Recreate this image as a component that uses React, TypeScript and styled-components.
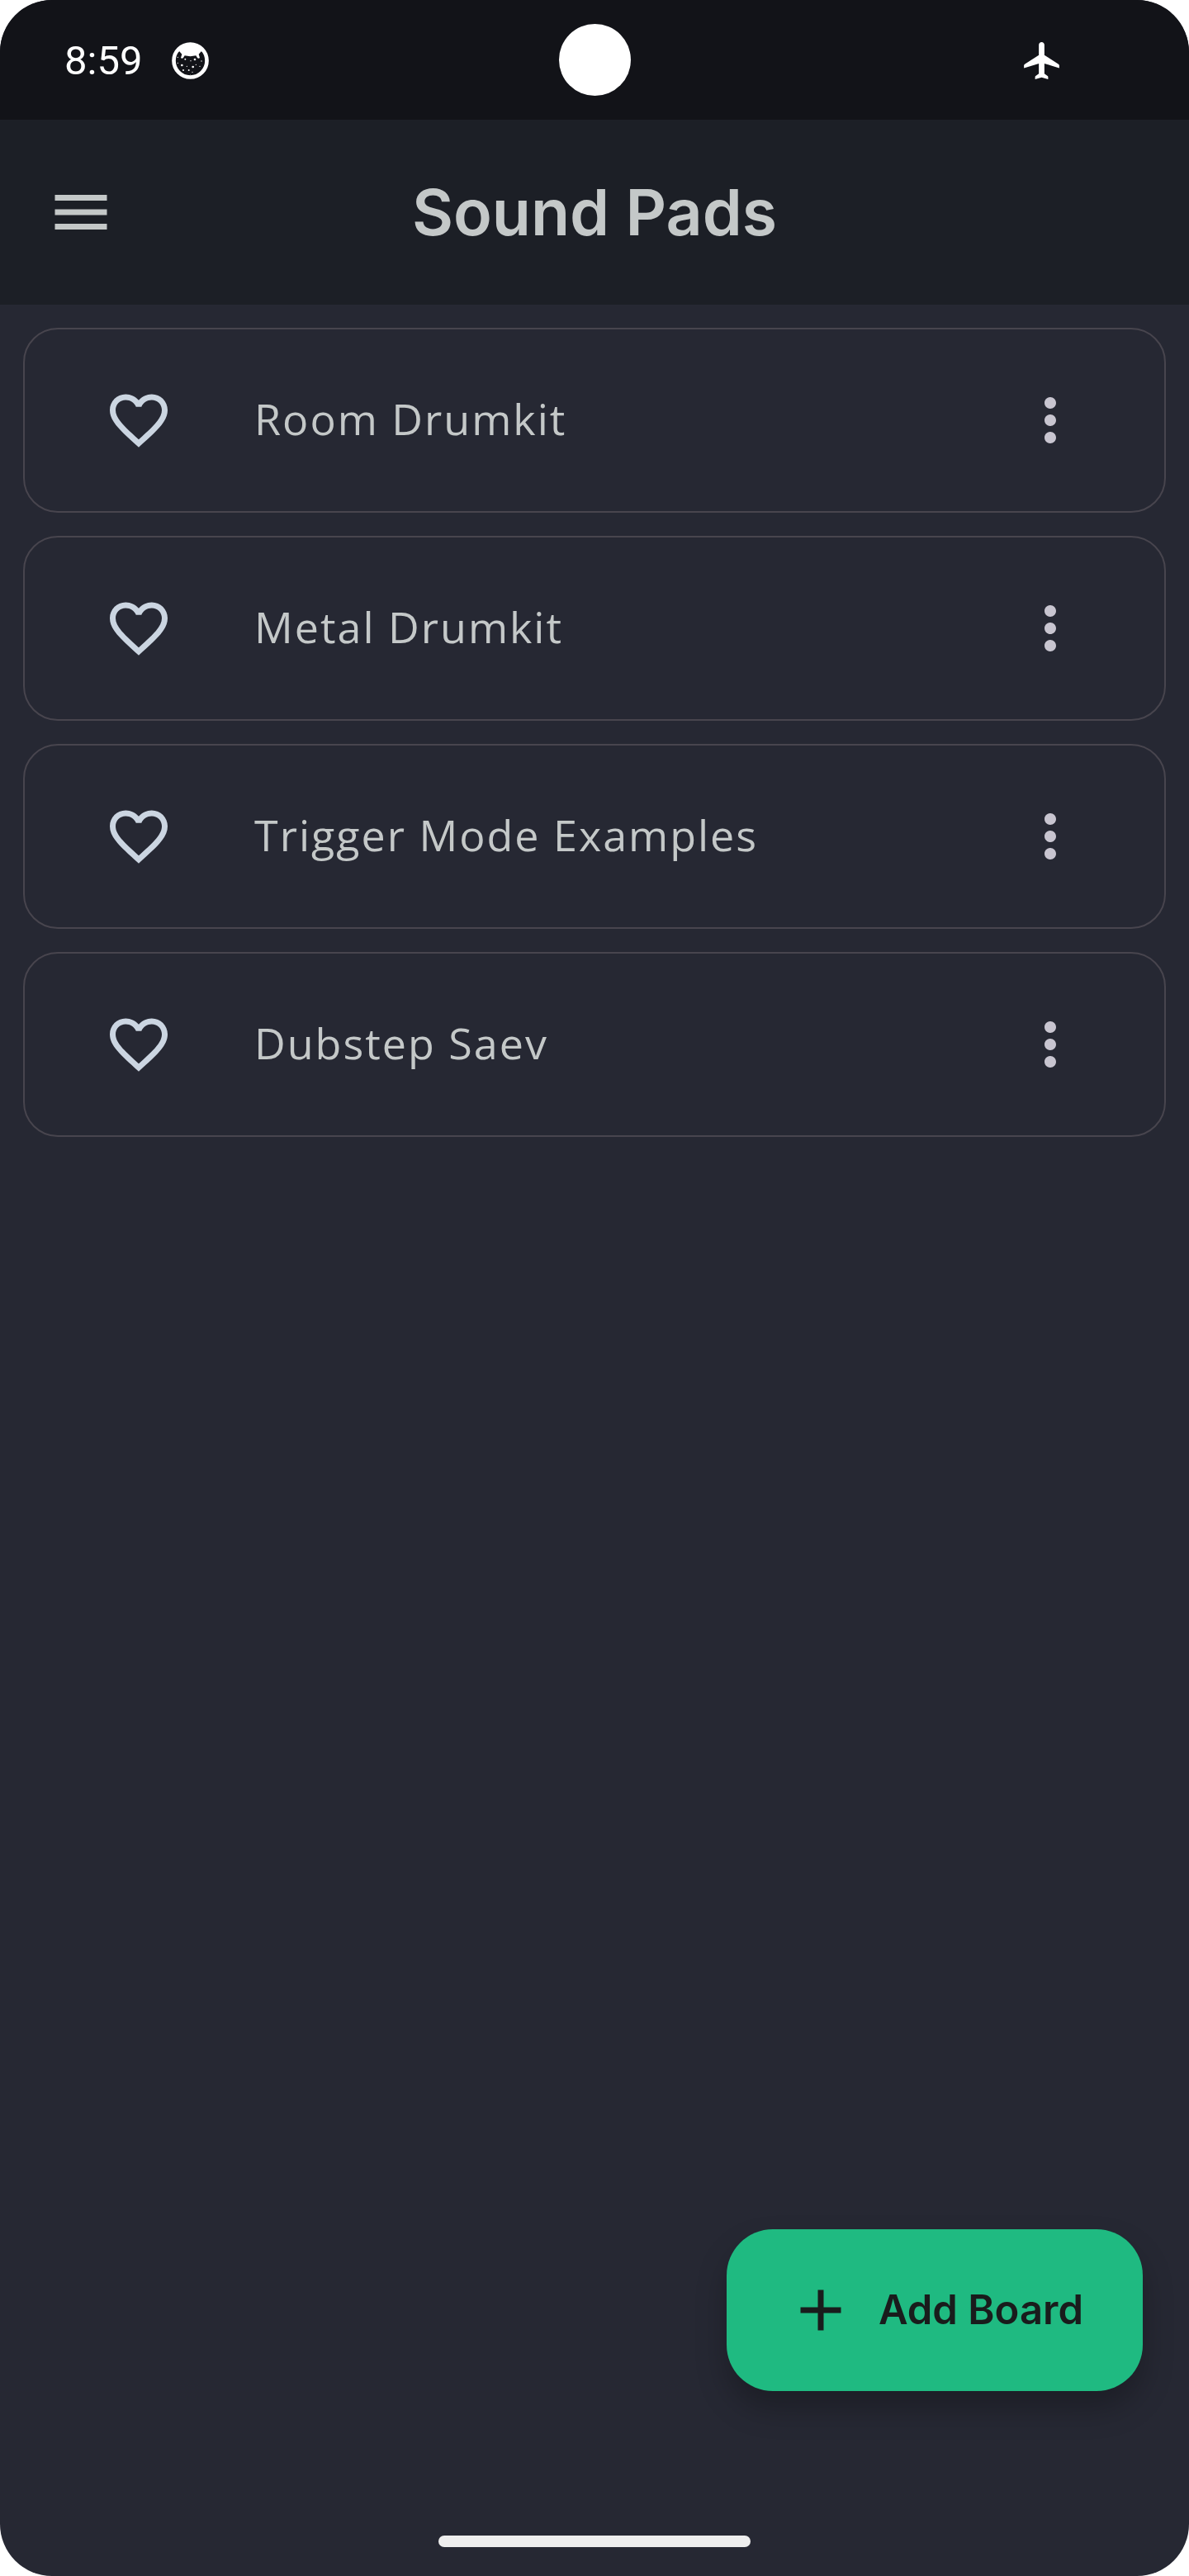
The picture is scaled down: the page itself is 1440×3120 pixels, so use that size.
import React, { useState } from 'react';
import styled, { createGlobalStyle } from 'styled-components';

const GlobalStyle = createGlobalStyle`
  *, *::before, *::after { box-sizing: border-box; }
  html, body { margin: 0; background: #ffffff; }
  button { margin: 0; border: 0; padding: 0; background: none; cursor: pointer; }
`;

const Screen = styled.div`
  display: flex;
  flex-direction: column;
  min-height: 100vh;
  overflow: hidden;
  border-radius: 63px;
  background: #262833;
  color: #c4c8c8;
  font-family: Inter, 'Liberation Sans', sans-serif;
`;

const StatusBar = styled.div`
  display: grid;
  grid-template-columns: 1fr auto 1fr;
  align-items: center;
  height: 145px;
  padding: 0 78px;
  background: #121318;
  color: #ffffff;
`;

const StatusGroup = styled.div<{ $end?: boolean }>`
  display: flex;
  align-items: center;
  justify-content: ${(p) => (p.$end ? 'flex-end' : 'flex-start')};
  gap: 36px;
  padding-top: 2px;
  padding-right: ${(p) => (p.$end ? '79px' : '0')};
`;

const Clock = styled.time`
  font: 400 49px/60px Roboto, sans-serif;
`;

const Camera = styled.div`
  width: 87px;
  height: 87px;
  border-radius: 50%;
  background: #ffffff;
`;

const Glyph = styled.svg`
  display: block;
  flex: none;
  fill: currentColor;
`;

const AppBar = styled.header`
  display: grid;
  grid-template-columns: 84px 1fr 84px;
  align-items: center;
  height: 224px;
  padding: 0 56px;
  background: #1c1f26;
`;

const Title = styled.h1`
  margin: 0;
  text-align: center;
  font-size: 77px;
  line-height: 98px;
  font-weight: 600;
`;

const IconButton = styled.button<{ $color: string }>`
  display: block;
  flex: none;
  color: ${(p) => p.$color};
`;

const BoardList = styled.ul`
  display: flex;
  flex-direction: column;
  gap: 28px;
  margin: 0;
  padding: 28px;
  list-style: none;
`;

const BoardCard = styled.li`
  display: flex;
  align-items: center;
  gap: 98px;
  height: 224px;
  padding: 0 96px;
  border: 2px solid #48454e;
  border-radius: 42px;
`;

const BoardName = styled.span`
  flex: 1;
  min-width: 0;
  padding-bottom: 4px;
  font: 400 52px/84px 'Open Sans', 'Noto Sans', sans-serif;
  letter-spacing: 2px;
`;

const AddButton = styled.button`
  display: flex;
  align-items: center;
  align-self: flex-end;
  gap: 28px;
  height: 196px;
  margin: auto 56px 0 0;
  padding: 0 72px;
  border-radius: 56px;
  background: #1fba81;
  color: #191c1c;
  box-shadow: 0 21px 36px rgba(0, 0, 0, 0.25);
  font: 600 49px/70px Inter, 'Liberation Sans', sans-serif;
`;

const NavigationBar = styled.footer`
  display: flex;
  justify-content: center;
  align-items: flex-end;
  height: 224px;
  padding-bottom: 35px;
`;

const Handle = styled.div`
  width: 378px;
  height: 14px;
  border-radius: 7px;
  background: #eeeeee;
`;

const paths = {
  menu: 'M3 18h18v-2H3v2zm0-5h18v-2H3v2zm0-7v2h18V6H3z',
  heart:
    'M16.5 3c-1.74 0-3.41.81-4.5 2.09C10.91 3.81 9.24 3 7.5 3 4.42 3 2 5.42 2 8.5c0 3.78 3.4 6.86 8.55 11.54L12 21.35l1.45-1.32C18.6 15.36 22 12.28 22 8.5 22 5.42 19.58 3 16.5 3zm-4.4 15.55l-.1.1-.1-.1C7.14 14.24 4 11.39 4 8.5 4 6.5 5.5 5 7.5 5c1.54 0 3.04.99 3.57 2.36h1.87C13.46 5.99 14.96 5 16.5 5c2 0 3.5 1.5 3.5 3.5 0 2.89-3.14 5.74-7.9 10.05z',
  heartFilled:
    'M12 21.35l-1.45-1.32C5.4 15.36 2 12.28 2 8.5 2 5.42 4.42 3 7.5 3c1.74 0 3.41.81 4.5 2.09C13.09 3.81 14.76 3 16.5 3 19.58 3 22 5.42 22 8.5c0 3.78-3.4 6.86-8.55 11.54L12 21.35z',
  more: 'M12 8c1.1 0 2-.9 2-2s-.9-2-2-2-2 .9-2 2 .9 2 2 2zm0 2c-1.1 0-2 .9-2 2s.9 2 2 2 2-.9 2-2-.9-2-2-2zm0 6c-1.1 0-2 .9-2 2s.9 2 2 2 2-.9 2-2-.9-2-2-2z',
  add: 'M19 13h-6v6h-2v-6H5v-2h6V5h2v6h6v2z',
};

const Icon = ({ name }: { name: keyof typeof paths }) => (
  <Glyph width="84" height="84" viewBox="0 0 24 24" aria-hidden="true">
    <path d={paths[name]} />
  </Glyph>
);

const freckles = [
  [22, 55, 2], [22, 76, 2], [37, 84, 4], [49, 62, 3], [42, 102, 3],
  [55, 88, 2], [62, 102, 3], [69, 68, 2], [77, 90, 4], [84, 63, 4],
  [88, 82, 2], [75, 109, 2], [102, 88, 2], [108, 69, 2], [67, 119, 1],
];

const FaceIcon = () => (
  <Glyph width="45" height="45" viewBox="0 0 135 135" role="img" aria-label="Notification">
    <circle cx="67.5" cy="67.5" r="60" fill="none" stroke="currentColor" strokeWidth="14" />
    <path d="M16 34 28 34 37 44 33 57Q37 62 42 57L47 49Q67 54 88 49L93 57Q97 62 102 57L98 44 107 34 119 34 96 8 40 8Z" />
    {freckles.map(([x, y, r]) => (
      <circle key={`${x}-${y}`} cx={x} cy={y} r={r} />
    ))}
  </Glyph>
);

const PlaneIcon = () => (
  <Glyph width="43" height="45" viewBox="2 2 19 20" role="img" aria-label="Airplane mode">
    <path d="M21 16v-1.4q0-.4-.4-.7L13 9V3.5c0-.83-.67-1.5-1.5-1.5S10 2.67 10 3.5V9l-7.6 4.9q-.4.3-.4.7V16l8-2.5V19l-1.7 1.2q-.3.2-.3.6V22l3.5-1 3.5 1v-1.2q0-.4-.3-.6L13 19v-5.5l8 2.5z" />
  </Glyph>
);

const boards = ['Room Drumkit', 'Metal Drumkit', 'Trigger Mode Examples', 'Dubstep Saev'];

function Board({ name }: { name: string }) {
  const [liked, setLiked] = useState(false);
  return (
    <BoardCard>
      <IconButton
        $color="#cbd5e1"
        type="button"
        aria-pressed={liked}
        aria-label={`Favorite ${name}`}
        onClick={() => setLiked(!liked)}
      >
        <Icon name={liked ? 'heartFilled' : 'heart'} />
      </IconButton>
      <BoardName>{name}</BoardName>
      <IconButton $color="#c8c5d0" type="button" aria-label={`Options for ${name}`}>
        <Icon name="more" />
      </IconButton>
    </BoardCard>
  );
}

export default function App() {
  return (
    <>
      <GlobalStyle />
      <Screen>
        <StatusBar>
          <StatusGroup>
            <Clock>8:59</Clock>
            <FaceIcon />
          </StatusGroup>
          <Camera />
          <StatusGroup $end>
            <PlaneIcon />
          </StatusGroup>
        </StatusBar>
        <AppBar>
          <IconButton $color="#c4c8c8" type="button" aria-label="Open menu">
            <Icon name="menu" />
          </IconButton>
          <Title>Sound Pads</Title>
        </AppBar>
        <main>
          <BoardList>
            {boards.map((name) => (
              <Board key={name} name={name} />
            ))}
          </BoardList>
        </main>
        <AddButton type="button">
          <Icon name="add" />
          Add Board
        </AddButton>
        <NavigationBar>
          <Handle />
        </NavigationBar>
      </Screen>
    </>
  );
}
